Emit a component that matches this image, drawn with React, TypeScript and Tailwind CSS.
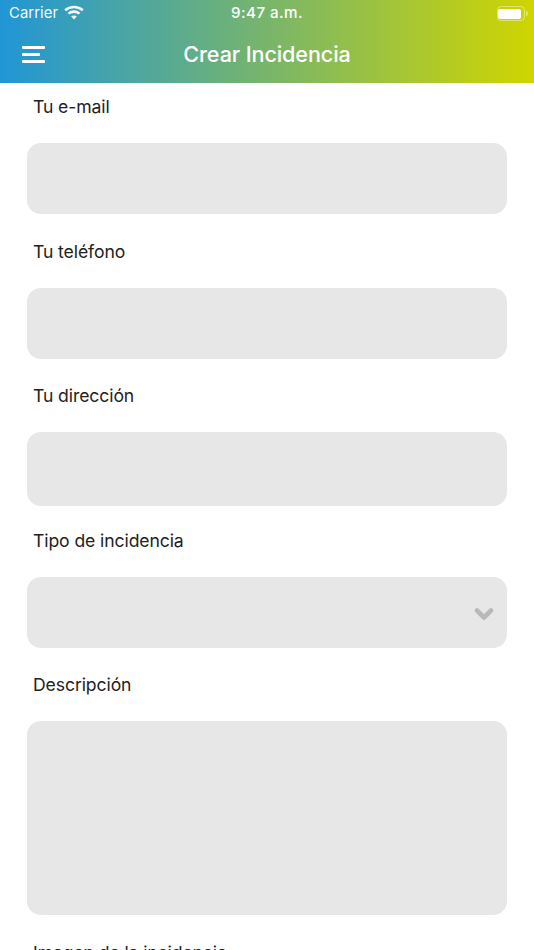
import { ChevronDown } from "lucide-react";

function Label({ text, className }: { text: string; className: string }) {
  return (
    <div className={`flex items-center pl-[33px] text-[17.6px] leading-none tracking-[-0.1px] text-[#222222] ${className}`}>
      {text}
    </div>
  );
}

function Wifi() {
  return (
    <svg width="20" height="15" viewBox="0 0 20 15" fill="none" stroke="white" strokeWidth="2.6">
      <path d="M1.2 5.2C6 .9 14 .9 18.8 5.2" />
      <path d="M4.5 8.6c3-2.7 8-2.7 11 0" />
      <path d="M10 14.5l-2.9-3.2c1.6-1.2 4.2-1.2 5.8 0z" fill="white" stroke="none" />
    </svg>
  );
}

function Battery() {
  return (
    <div className="flex items-center gap-[1px]">
      <div className="flex h-[15px] w-[28px] items-center rounded-[4px] border-[1.5px] border-white/40">
        <div className="h-[10px] w-[23px] rounded-[2px] bg-white" />
      </div>
      <div className="h-[5px] w-[1.5px] rounded-r-sm bg-white/40" />
    </div>
  );
}

export default function App() {
  return (
    <div className="h-[950px] w-[534px] overflow-hidden bg-white font-['Inter',sans-serif]">
      <header className="h-[83px] bg-linear-to-r/srgb from-[#2196d6] to-[#d0d500] text-white">
        <div className="relative flex h-[27px] items-center justify-between pl-[9px] pr-[6.5px]">
          <div className="flex items-center gap-[6px] text-[14.8px] tracking-[0.1px] opacity-95">
            <span>Carrier</span>
            <div className="-mt-[3px]">
              <Wifi />
            </div>
          </div>
          <span className="absolute left-0 right-0 text-center text-[15.2px] font-medium tracking-[0.4px]">9:47 a.m.</span>
          <Battery />
        </div>
        <div className="relative flex h-[56px] items-center justify-center pb-[1px]">
          <div className="absolute left-[22px] top-[19px] flex w-[23px] flex-col gap-[4px]">
            <div className="h-[3px] w-[23px] rounded-[1px] bg-white" />
            <div className="h-[3px] w-[18px] rounded-[1px] bg-white" />
            <div className="h-[3px] w-[23px] rounded-[1px] bg-white" />
          </div>
          <h1 className="text-[21.6px] font-medium tracking-[-0.1px]">Crear Incidencia</h1>
        </div>
      </header>

      <main className="px-[27px]">
        <div className="-mx-[27px]">
          <Label text="Tu e-mail" className="h-[60px] pb-[12px]" />
        </div>
        <div className="h-[71px] rounded-[14px] bg-[#e7e7e7]" />
        <div className="-mx-[27px]">
          <Label text="Tu teléfono" className="h-[74px] pt-[1px]" />
        </div>
        <div className="h-[71px] rounded-[14px] bg-[#e7e7e7]" />
        <div className="-mx-[27px]">
          <Label text="Tu dirección" className="h-[73px]" />
        </div>
        <div className="h-[74px] rounded-[14px] bg-[#e7e7e7]" />
        <div className="-mx-[27px]">
          <Label text="Tipo de incidencia" className="h-[71px] pb-[1px]" />
        </div>
        <div className="flex h-[71px] items-center justify-end rounded-[14px] bg-[#e7e7e7] pr-[9px] pt-[3px]">
          <ChevronDown className="h-[28px] w-[28px] text-[#b9b9b9]" strokeWidth={4} />
        </div>
        <div className="-mx-[27px]">
          <Label text="Descripción" className="h-[73px]" />
        </div>
        <div className="h-[194px] rounded-[14px] bg-[#e7e7e7]" />
        <div className="-mx-[27px]">
          <Label text="Imagen de la incidencia" className="h-[70px] pt-[6px]" />
        </div>
      </main>
    </div>
  );
}
